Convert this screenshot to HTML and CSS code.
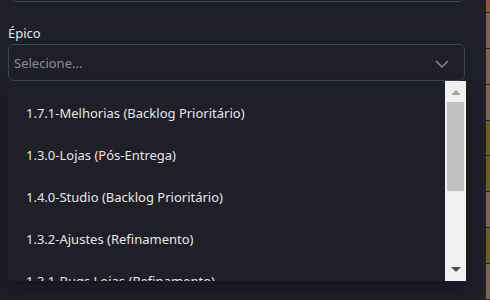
FILE: index.html
```html
<!DOCTYPE html>
<html>
<head lang="pt">
    <meta charset="UTF-8">
    <title>Épico</title>
    <link rel="stylesheet" href="styles.css">
</head>
<body>
<div class="page">
    <div class="panel">
        <div class="prev-field"></div>
        <label class="field-label">Épico</label>
        <div class="select">
            <span class="placeholder">Selecione...</span>
            <svg class="chevron" width="14" height="8" viewBox="0 0 14 8">
                <path d="M1 1 L7 7 L13 1" fill="none" stroke="#8b8e95" stroke-width="1.4"/>
            </svg>
        </div>
        <div class="listbox">
            <ul class="options">
                <li>1.7.1-Melhorias (Backlog Prioritário)</li>
                <li>1.3.0-Lojas (Pós-Entrega)</li>
                <li>1.4.0-Studio (Backlog Prioritário)</li>
                <li>1.3.2-Ajustes (Refinamento)</li>
                <li>1.3.1-Bugs Lojas (Refinamento)</li>
            </ul>
            <div class="scrollbar">
                <span class="arrow up"></span>
                <span class="thumb"></span>
                <span class="arrow down"></span>
            </div>
        </div>
    </div>
    <div class="behind">
        <div class="row top"></div>
        <div class="row brown"></div>
        <div class="row brown"></div>
        <div class="row brown"></div>
        <div class="row olive"></div>
        <div class="row olive"></div>
        <div class="row brown"></div>
        <div class="row olive"></div>
        <div class="row brown"></div>
    </div>
</div>
</body>
</html>
```

FILE: styles.css
```css
*{
    margin:0;
    padding:0;
    list-style-type: none;
    box-sizing: border-box;
}
body{
    background:#1e1f27;
    font-family: "Noto Sans", "Open Sans", sans-serif;
    overflow:hidden;
}
.page{
    display:flex;
    width:490px;
    height:300px;
}
.panel{
    width:486px;
    padding:0 21px 0 8px;
    background:#1e1f27;
}
.prev-field{
    height:30px;
    margin-top:-28px;
    margin-left:2px;
    border:1px solid #3a4556;
    border-radius:6px;
}
.field-label{
    display:block;
    margin-top:22px;
    height:20px;
    font-size:13px;
    color:#e9e9ea;
}
.select{
    height:37px;
    border:1px solid #3a4759;
    border-radius:6px;
    display:flex;
    align-items:center;
    justify-content:space-between;
    padding:0 15px 0 5px;
}
.placeholder{
    font-size:13px;
    color:#8b8e95;
}
.chevron{
    margin-top:2px;
}
.listbox{
    display:flex;
    height:200px;
    width:458px;
    overflow:hidden;
    box-shadow: 0 10px 14px rgba(10,10,30,0.35);
}
.options{
    flex:1;
    padding-top:11px;
    padding-left:18px;
}
.options li{
    height:42px;
    line-height:42px;
    font-size:13px;
    color:#e6e6e8;
    white-space:nowrap;
}
.scrollbar{
    width:21px;
    background:#f0f0f0;
    display:flex;
    flex-direction:column;
    align-items:center;
    padding:0 2px;
}
.arrow{
    width:0;
    height:0;
    border-left:5px solid transparent;
    border-right:5px solid transparent;
}
.arrow.up{
    margin-top:9px;
    border-bottom:5px solid #a3a3a3;
}
.arrow.down{
    margin-top:auto;
    margin-bottom:9px;
    border-top:5px solid #505050;
}
.thumb{
    width:17px;
    height:89px;
    margin-top:7px;
    background:#c1c1c1;
}
.behind{
    flex:1;
    display:flex;
    flex-direction:column;
    background:#7d6354;
}
.row{
    height:36px;
    border-bottom:1px solid #2c2222;
}
.row.top{
    height:13px;
    background:#a0522d;
}
.row.brown{
    background:#7d6354;
}
.row.olive{
    background:#6e6111;
}
```
